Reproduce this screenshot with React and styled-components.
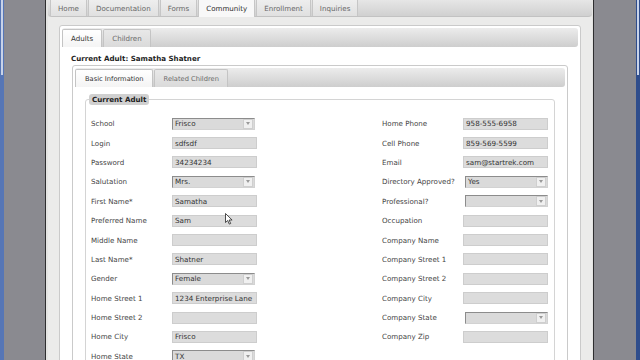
import React from "react";
import styled, { createGlobalStyle } from "styled-components";

const GlobalStyle = createGlobalStyle`
  html, body {
    margin: 0;
    padding: 0;
    background: #8a8a90;
  }
  body {
    font-family: "DejaVu Sans", Verdana, sans-serif;
    font-size: 7.1px;
    color: #444;
  }
`;

const Screen = styled.div`
  position: relative;
  display: flex;
  width: 640px;
  height: 360px;
  overflow: hidden;
`;

const Edge = styled.div`
  width: 4px;
  background: ${p => (p.$right ? "#2f4d8c" : "#5676b6")};
  display: flex;
  flex-direction: column;
  align-items: ${p => (p.$right ? "flex-start" : "center")};
`;

const Thumb = styled.div`
  width: 2px;
  height: 75px;
  margin-left: ${p => (p.$right ? "1px" : "0")};
  background: #c9d3e8;
`;

const Gutter = styled.div`
  width: ${p => (p.$right ? "42px" : "41px")};
  background: #8a8a90;
  border-left: ${p => (p.$right ? "1px solid #2e2e30" : "none")};
  border-right: ${p => (p.$right ? "none" : "1px solid #2e2e30")};
`;

const Page = styled.div`
  width: 547px;
  box-sizing: border-box;
  padding: 0 1px 0 2px;
  background: #e4e4e2;
  display: flex;
  flex-direction: column;
`;

const MainTabs = styled.div`
  display: flex;
  gap: 1px;
  height: 16px;
  padding-left: 2px;
  background: linear-gradient(#e6e6e6, #d0d0d0);
  border-bottom: 1px solid #c2c2c2;
  border-radius: 0 0 4px 4px;
`;

const MainTab = styled.div`
  display: flex;
  align-items: center;
  padding: 0 7px;
  height: ${p => (p.$active ? "17px" : "16px")};
  box-sizing: border-box;
  border-left: 1px solid #c6c6c6;
  border-right: 1px solid #c6c6c6;
  background: ${p => (p.$active ? "#f8f8f8" : "linear-gradient(#eeeeee, #e0e0e0)")};
  color: ${p => (p.$active ? "#2c2c2c" : "#666")};
`;

const PageBody = styled.div`
  flex: 1;
  padding: 8px 11px 0;
  background: #ebebea;
`;

const Panel = styled.div`
  height: ${p => (p.$inner ? "auto" : "400px")};
  border: 1px solid #cacaca;
  border-radius: 3px;
  padding: 2px;
  background: #fff;
`;

const TabStrip = styled.div`
  display: flex;
  align-items: flex-end;
  height: 19px;
  background: linear-gradient(#ececec, #cecece);
  border-radius: 3px;
  gap: 1px;
`;

const Tab = styled.div`
  display: flex;
  align-items: center;
  height: 18px;
  box-sizing: border-box;
  padding: ${p => (p.$small ? "0 8px 0 9px" : "0 8px")};
  font-size: ${p => (p.$small ? "6.7px" : "7.1px")};
  border: 1px solid #c4c4c4;
  border-bottom: none;
  border-radius: 2px 2px 0 0;
  background: ${p => (p.$active ? "linear-gradient(#ffffff, #f4f4f4)" : "linear-gradient(#e8e8e8, #dadada)")};
  color: ${p => (p.$active ? "#333" : "#6a6a6a")};
`;

const PanelBody = styled.div`
  padding: 7px 10px 0;
`;

const Heading = styled.div`
  font-weight: bold;
  color: #1e1e1e;
  line-height: 10px;
  margin-bottom: 1px;
  margin-left: -1px;
`;

const Fieldset = styled.fieldset`
  margin: 0;
  padding: 0 6px 40px 5px;
  border: 1px solid #d4d4d4;
  border-radius: 3px;
`;

const Legend = styled.legend`
  margin-left: -2px;
  padding: 0 3px;
  line-height: 11px;
  font-weight: bold;
  color: #222;
  background: #d0d0d0;
  border-radius: 3px;
`;

const Form = styled.div`
  display: flex;
  flex-direction: column;
  padding-top: 9px;
`;

const Row = styled.div`
  display: grid;
  grid-template-columns: 81px 85px 125px 81px 85px;
  align-items: center;
  height: 19.4px;
`;

const Label = styled.span`
  color: #444;
  white-space: nowrap;
`;

const Input = styled.input`
  box-sizing: border-box;
  width: 85px;
  height: 12px;
  margin: 0;
  padding: 0 2px;
  border: 1px solid #cdcdcd;
  background: #dcdcdc;
  font-family: "DejaVu Sans", Verdana, sans-serif;
  font-size: 7.2px;
  color: #333;
  outline: none;
`;

const SelectBox = styled.div`
  box-sizing: border-box;
  display: flex;
  align-items: center;
  width: 83px;
  height: 12px;
  margin-left: ${p => (p.$right ? "2px" : "0")};
  border: 1px solid;
  border-color: #8c8c8c #d2d2d2 #d2d2d2 #8c8c8c;
  background: #dadada;
  color: #333;
  font-size: 7.2px;
`;

const SelectText = styled.span`
  flex: 1;
  padding-left: 2px;
`;

const Arrow = styled.span`
  display: flex;
  align-items: center;
  justify-content: center;
  width: 8px;
  height: 8px;
  margin-right: 1px;
  background: #f0f0f0;
  border: 1px solid #cfcfcf;
`;

const Cursor = styled.svg`
  position: absolute;
  left: 225px;
  top: 213px;
`;

function Select({ value, right }) {
  return (
    <SelectBox $right={right}>
      <SelectText>{value}</SelectText>
      <Arrow>
        <svg width="4" height="3" viewBox="0 0 4 3">
          <path d="M0 0h4L2 3z" fill="#9a9a9a" />
        </svg>
      </Arrow>
    </SelectBox>
  );
}

function Field({ field, right }) {
  if (!field) return <span />;
  if (field.select) return <Select value={field.value} right={right} />;
  return <Input readOnly value={field.value} />;
}

const left = [
  { label: "School", value: "Frisco", select: true },
  { label: "Login", value: "sdfsdf" },
  { label: "Password", value: "34234234" },
  { label: "Salutation", value: "Mrs.", select: true },
  { label: "First Name*", value: "Samatha" },
  { label: "Preferred Name", value: "Sam" },
  { label: "Middle Name", value: "" },
  { label: "Last Name*", value: "Shatner" },
  { label: "Gender", value: "Female", select: true },
  { label: "Home Street 1", value: "1234 Enterprise Lane" },
  { label: "Home Street 2", value: "" },
  { label: "Home City", value: "Frisco" },
  { label: "Home State", value: "TX", select: true },
];

const right = [
  { label: "Home Phone", value: "958-555-6958" },
  { label: "Cell Phone", value: "859-569-5599" },
  { label: "Email", value: "sam@startrek.com" },
  { label: "Directory Approved?", value: "Yes", select: true },
  { label: "Professional?", value: "", select: true },
  { label: "Occupation", value: "" },
  { label: "Company Name", value: "" },
  { label: "Company Street 1", value: "" },
  { label: "Company Street 2", value: "" },
  { label: "Company City", value: "" },
  { label: "Company State", value: "", select: true },
  { label: "Company Zip", value: "" },
];

const mainTabs = ["Home", "Documentation", "Forms", "Community", "Enrollment", "Inquiries"];

export default function App() {
  return (
    <>
      <GlobalStyle />
      <Screen>
        <Edge>
          <Thumb />
        </Edge>
        <Gutter />
        <Page>
          <MainTabs>
            {mainTabs.map(t => (
              <MainTab key={t} $active={t === "Community"}>{t}</MainTab>
            ))}
          </MainTabs>
          <PageBody>
            <Panel>
              <TabStrip>
                <Tab $active>Adults</Tab>
                <Tab>Children</Tab>
              </TabStrip>
              <PanelBody>
                <Heading>Current Adult: Samatha Shatner</Heading>
                <Panel $inner>
                  <TabStrip>
                    <Tab $small $active>Basic Information</Tab>
                    <Tab $small>Related Children</Tab>
                  </TabStrip>
                  <PanelBody>
                    <Fieldset>
                      <Legend>Current Adult</Legend>
                      <Form>
                        {left.map((l, i) => {
                          const r = right[i];
                          return (
                            <Row key={l.label}>
                              <Label>{l.label}</Label>
                              <Field field={l} />
                              <span />
                              <Label>{r ? r.label : ""}</Label>
                              <Field field={r} right />
                            </Row>
                          );
                        })}
                      </Form>
                    </Fieldset>
                  </PanelBody>
                </Panel>
              </PanelBody>
            </Panel>
          </PageBody>
        </Page>
        <Gutter $right />
        <Edge $right>
          <Thumb $right />
        </Edge>
        <Cursor width="8" height="12" viewBox="0 0 8 12">
          <path d="M0.5 0.5v9l2.2-2 1.6 3.6 1.4-.6-1.6-3.5h3z" fill="#fff" stroke="#222" strokeWidth="0.8" />
        </Cursor>
      </Screen>
    </>
  );
}
